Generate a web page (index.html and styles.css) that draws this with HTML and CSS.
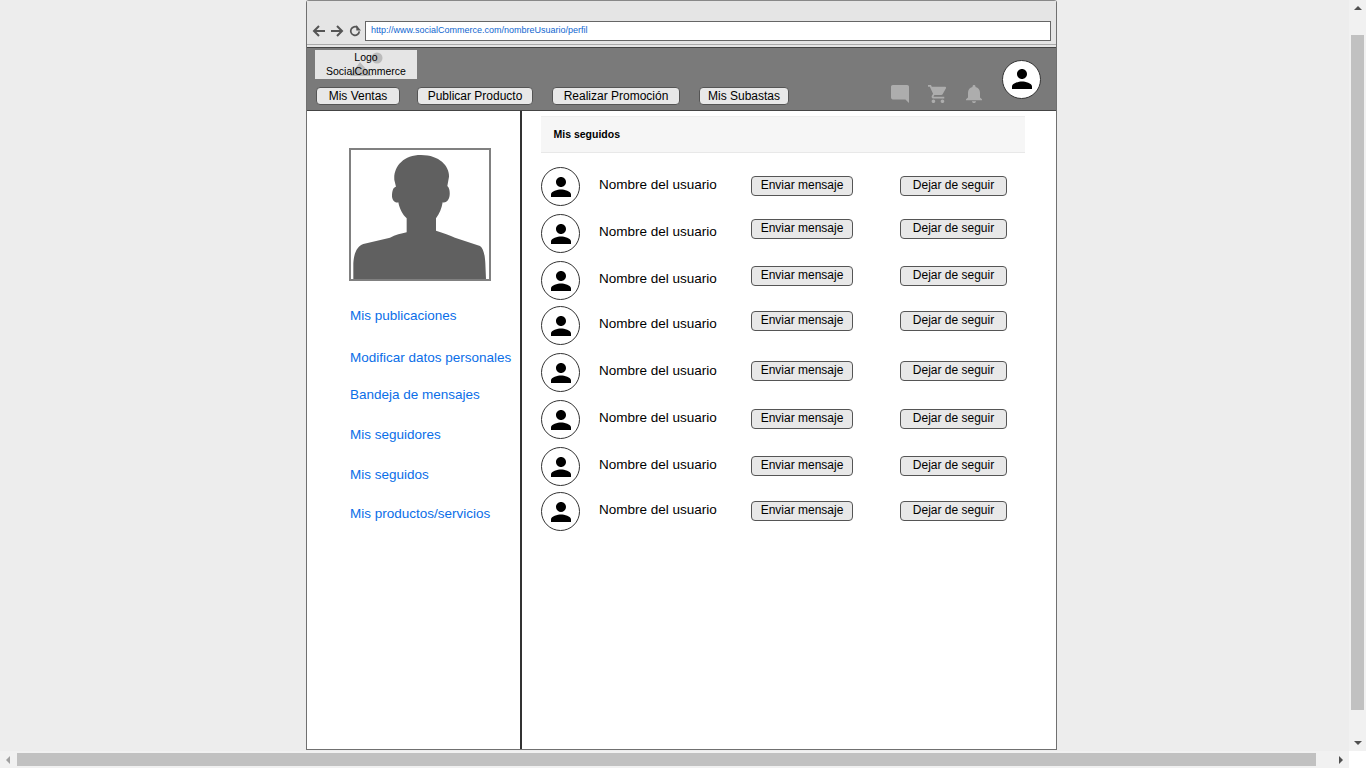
FILE: index.html
```html
<!DOCTYPE html>
<html lang="en">
  <head>
    <meta charset="UTF-8" />
    <title>Mis seguidos</title>
    <link rel="stylesheet" href="styles.css">
  </head>

  <body>
    <svg class="icon-defs" width="0" height="0">
      <symbol id="person" viewBox="0 0 24 24">
        <path d="M12 12c2.21 0 4-1.79 4-4s-1.79-4-4-4-4 1.79-4 4 1.79 4 4 4zm0 2c-2.67 0-8 1.34-8 4v2h16v-2c0-2.66-5.33-4-8-4z" />
      </symbol>
    </svg>

    <div class="viewport">
      <div class="frame">
        <div class="browser-bar">
          <svg class="browser-icon" viewBox="0 0 14 14"><path d="M13 7H2.5M7 2 2 7l5 5" /></svg>
          <svg class="browser-icon" viewBox="0 0 14 14"><path d="M1 7h10.5M7 2l5 5-5 5" /></svg>
          <svg class="browser-icon browser-icon-reload" viewBox="0 0 14 14"><path d="M12 7.500A5 5 0 1 1 10 3" /><path class="solid" d="M8.500 0v6.500H14z" /></svg>
          <div class="url-box">http://www.socialCommerce.com/nombreUsuario/perfil</div>
        </div>

        <header class="topbar">
          <div class="topbar-left">
            <div class="logo">
              <svg class="logo-art" viewBox="0 0 60 29"><circle cx="42" cy="8" r="5.500" /><path d="M15 26 25 12l12 14z" /></svg>
              <span class="logo-text">Logo<br />SocialCommerce</span>
            </div>
            <nav class="main-nav">
              <button class="btn nav-ventas">Mis Ventas</button>
              <button class="btn nav-publicar">Publicar Producto</button>
              <button class="btn nav-promo">Realizar Promoción</button>
              <button class="btn nav-subastas">Mis Subastas</button>
            </nav>
          </div>
          <div class="topbar-right">
            <svg class="top-icon icon-chat" viewBox="2 2 20 20" preserveAspectRatio="none"><path d="M4 2h16c1.100 0 2 .9 2 2v18l-4-4H4c-1.100 0-2-.9-2-2V4c0-1.100.9-2 2-2z" /></svg>
            <svg class="top-icon icon-cart" viewBox="1 2 21 20" preserveAspectRatio="none"><path d="M7 18c-1.100 0-1.990.9-1.990 2S5.900 22 7 22s2-.9 2-2-.9-2-2-2zM1 2v2h2l3.600 7.590-1.350 2.450c-.16.28-.25.61-.25.96 0 1.100.9 2 2 2h12v-2H7.420c-.14 0-.25-.11-.25-.25l.03-.12.9-1.630h7.450c.75 0 1.410-.41 1.750-1.030l3.580-6.470c.08-.14.12-.31.12-.48 0-.55-.45-1-1-1H5.210l-.94-2H1zm16 16c-1.100 0-1.990.9-1.990 2s.89 2 1.990 2 2-.9 2-2-.9-2-2-2z" /></svg>
            <svg class="top-icon icon-bell" viewBox="4 2.500 16 19.500" preserveAspectRatio="none"><path d="M12 22c1.100 0 2-.9 2-2h-4c0 1.100.89 2 2 2zm6-6v-5c0-3.070-1.640-5.640-4.500-6.320V4c0-.83-.67-1.500-1.500-1.500s-1.500.67-1.500 1.500v.68C7.630 5.360 6 7.920 6 11v5l-2 2v1h16v-1l-2-2z" /></svg>
            <div class="avatar avatar-top"><svg viewBox="0 0 24 24"><use href="#person" /></svg></div>
          </div>
        </header>

        <div class="content">
          <aside class="sidebar">
            <div class="profile-pic">
              <svg viewBox="33 30 414 387">
                <path d="M40 417V370C42 340 50 320 70 312L150 293C165 285 185 280 200 277V235C188 225 178 205 175 187C165 190 155 180 156 165C157 150 160 142 168 140L163 120C160 80 190 45 243 45C300 45 328 80 327 110L322 138C328 142 330 155 329 165C328 180 318 190 308 187C305 205 298 222 288 235V272C310 278 330 287 345 293L420 318C430 325 435 345 436 370L438 417Z" />
              </svg>
            </div>
            <ul class="side-links">
              <li class="link-pub"><a href="#">Mis publicaciones</a></li>
              <li class="link-datos"><a href="#">Modificar datos personales</a></li>
              <li class="link-bandeja"><a href="#">Bandeja de mensajes</a></li>
              <li class="link-seguidores"><a href="#">Mis seguidores</a></li>
              <li class="link-seguidos"><a href="#">Mis seguidos</a></li>
              <li class="link-productos"><a href="#">Mis productos/servicios</a></li>
            </ul>
          </aside>

          <main class="main">
            <div class="section-title">Mis seguidos</div>
            <div class="user-list">
              <div class="user-row btn-low">
                <div class="avatar"><svg viewBox="0 0 24 24"><use href="#person" /></svg></div>
                <span class="user-name">Nombre del usuario</span>
                <button class="btn btn-msg">Enviar mensaje</button>
                <button class="btn btn-unfollow">Dejar de seguir</button>
              </div>
              <div class="user-row btn-high">
                <div class="avatar"><svg viewBox="0 0 24 24"><use href="#person" /></svg></div>
                <span class="user-name">Nombre del usuario</span>
                <button class="btn btn-msg">Enviar mensaje</button>
                <button class="btn btn-unfollow">Dejar de seguir</button>
              </div>
              <div class="user-row btn-high">
                <div class="avatar"><svg viewBox="0 0 24 24"><use href="#person" /></svg></div>
                <span class="user-name">Nombre del usuario</span>
                <button class="btn btn-msg">Enviar mensaje</button>
                <button class="btn btn-unfollow">Dejar de seguir</button>
              </div>
              <div class="user-row btn-high">
                <div class="avatar"><svg viewBox="0 0 24 24"><use href="#person" /></svg></div>
                <span class="user-name">Nombre del usuario</span>
                <button class="btn btn-msg">Enviar mensaje</button>
                <button class="btn btn-unfollow">Dejar de seguir</button>
              </div>
              <div class="user-row btn-mid">
                <div class="avatar"><svg viewBox="0 0 24 24"><use href="#person" /></svg></div>
                <span class="user-name">Nombre del usuario</span>
                <button class="btn btn-msg">Enviar mensaje</button>
                <button class="btn btn-unfollow">Dejar de seguir</button>
              </div>
              <div class="user-row btn-low">
                <div class="avatar"><svg viewBox="0 0 24 24"><use href="#person" /></svg></div>
                <span class="user-name">Nombre del usuario</span>
                <button class="btn btn-msg">Enviar mensaje</button>
                <button class="btn btn-unfollow">Dejar de seguir</button>
              </div>
              <div class="user-row btn-low">
                <div class="avatar"><svg viewBox="0 0 24 24"><use href="#person" /></svg></div>
                <span class="user-name">Nombre del usuario</span>
                <button class="btn btn-msg">Enviar mensaje</button>
                <button class="btn btn-unfollow">Dejar de seguir</button>
              </div>
              <div class="user-row btn-low">
                <div class="avatar"><svg viewBox="0 0 24 24"><use href="#person" /></svg></div>
                <span class="user-name">Nombre del usuario</span>
                <button class="btn btn-msg">Enviar mensaje</button>
                <button class="btn btn-unfollow">Dejar de seguir</button>
              </div>
            </div>
          </main>
        </div>
      </div>
    </div>

    <div class="scroll-v">
      <span class="arrow arrow-up"></span>
      <div class="track-v"><div class="thumb thumb-v"></div></div>
      <span class="arrow arrow-down"></span>
    </div>
    <div class="scroll-h">
      <span class="arrow arrow-left"></span>
      <div class="track-h"><div class="thumb thumb-h"></div></div>
      <span class="arrow arrow-right"></span>
    </div>
    <div class="scroll-corner"></div>
  </body>
</html>
```

FILE: styles.css
```css
html,
body {
  margin: 0;
  padding: 0;
  height: 100%;
  overflow: hidden;
}

body {
  display: grid;
  grid-template-columns: 1349px 17px;
  grid-template-rows: 751px 17px;
  font-family: "Liberation Sans", Arial, sans-serif;
  background-color: #ededed;
}

.icon-defs {
  position: absolute;
}

.viewport {
  overflow: hidden;
  padding-left: 306px;
}

.frame {
  box-sizing: border-box;
  width: 751px;
  height: 750px;
  border: 1px solid #707070;
  border-top-color: #888;
  border-radius: 3px 3px 0 0;
  background-color: #fff;
  display: flex;
  flex-direction: column;
}

/* browser chrome */
.browser-bar {
  box-sizing: border-box;
  height: 46px;
  padding: 19px 5px 5px 5px;
  background-color: #e5e5e5;
  box-shadow: inset 0 -2px 0 #e5e5e5, inset 0 -3px 0 #aaa;
  display: flex;
  align-items: center;
  gap: 4px;
}

.browser-icon {
  width: 14px;
  height: 14px;
  fill: none;
  stroke: #555;
  stroke-width: 2;
}

.browser-icon-reload {
  width: 12px;
  height: 12px;
  margin-left: 1px;
  stroke-width: 2;
}

.browser-icon .solid {
  fill: #555;
  stroke: none;
}

.url-box {
  box-sizing: border-box;
  flex: 1;
  height: 20px;
  padding-left: 5px;
  background-color: #fff;
  border: 1px solid #666;
  font-size: 9px;
  line-height: 17px;
  color: #0f66d0;
}

/* top bar */
.topbar {
  box-sizing: border-box;
  height: 64px;
  background-color: #7a7a7a;
  border-top: 1px solid #444;
  border-bottom: 1px solid #444;
  display: flex;
  justify-content: space-between;
  padding: 2px 15px 0 8px;
}

.logo {
  position: relative;
  width: 102px;
  height: 29px;
  background-color: #e5e5e5;
  text-align: center;
  font-size: 10.5px;
  line-height: 14px;
  color: #000;
}

.logo-art {
  position: absolute;
  left: 20px;
  top: 0;
  width: 60px;
  height: 29px;
  fill: #bbb;
}

.logo-text {
  position: relative;
}

.main-nav {
  display: flex;
  margin: 8px 0 0 1px;
}

.btn {
  box-sizing: border-box;
  height: 18px;
  padding: 0;
  background-color: #e8e8e8;
  border: 1px solid #555;
  border-radius: 4px;
  font-family: "Liberation Sans", Arial, sans-serif;
  font-size: 12px;
  line-height: 16px;
  color: #000;
}

.nav-ventas {
  width: 84px;
  margin-right: 17px;
}

.nav-publicar {
  width: 116px;
  margin-right: 19px;
}

.nav-promo {
  width: 128px;
  margin-right: 19px;
}

.nav-subastas {
  width: 90px;
}

.topbar-right {
  display: flex;
  align-items: flex-start;
}

.top-icon {
  fill: #adadad;
  height: 18px;
  margin-top: 35px;
}

.icon-chat {
  width: 18px;
  margin-right: 19px;
}

.icon-cart {
  width: 19px;
  margin-right: 19px;
}

.icon-bell {
  width: 16px;
  margin-right: 20px;
}

.avatar {
  box-sizing: border-box;
  width: 39px;
  height: 39px;
  flex: none;
  background-color: #fff;
  border: 1px solid #333;
  border-radius: 50%;
  display: flex;
  align-items: center;
  justify-content: center;
}

.avatar svg {
  width: 30px;
  height: 30px;
  fill: #000;
}

.avatar-top {
  margin-top: 9.5px;
}

/* body */
.content {
  flex: 1;
  display: flex;
  min-height: 0;
}

.sidebar {
  box-sizing: border-box;
  width: 215px;
  border-right: 2px solid #333;
  padding: 37px 0 0 42px;
}

.profile-pic {
  box-sizing: border-box;
  width: 142px;
  height: 133px;
  border: 2px solid #808080;
  background-color: #fff;
}

.profile-pic svg {
  display: block;
  width: 138px;
  height: 129px;
  fill: #606060;
}

.side-links {
  list-style: none;
  margin: 0;
  padding: 0 0 0 1px;
  font-size: 13.5px;
  line-height: 16px;
}

.side-links a {
  color: #0a6ee8;
  text-decoration: none;
  white-space: nowrap;
}

.link-pub {
  margin-top: 27px;
}

.link-datos {
  margin-top: 26px;
}

.link-bandeja {
  margin-top: 21px;
}

.link-seguidores {
  margin-top: 24px;
}

.link-seguidos {
  margin-top: 24px;
}

.link-productos {
  margin-top: 23px;
}

.main {
  flex: 1;
  padding: 5px 0 0 19px;
}

.section-title {
  box-sizing: border-box;
  width: 484px;
  height: 37px;
  padding-left: 12.5px;
  background-color: #f6f6f6;
  border-top: 1px solid #eee;
  border-bottom: 1px solid #e8e8e8;
  font-size: 10.5px;
  font-weight: bold;
  line-height: 35px;
  color: #000;
}

.user-list {
  margin-top: 14px;
}

.user-row {
  display: grid;
  grid-template-columns: 58px 152px 149px 107px;
  height: 40px;
  margin-bottom: 7px;
  align-items: start;
}

.user-row:nth-child(3),
.user-row:nth-child(7) {
  margin-bottom: 5px;
}

.user-name {
  margin-top: 10px;
  font-size: 13.5px;
  line-height: 16px;
  color: #000;
}

.btn-msg {
  width: 102px;
  height: 20px;
  padding-bottom: 2px;
}

.btn-unfollow {
  width: 107px;
  height: 20px;
  padding-bottom: 2px;
}

.btn-low .btn {
  margin-top: 9px;
}

.btn-mid .btn {
  margin-top: 8px;
}

.btn-high .btn {
  margin-top: 5px;
}

/* fake scrollbars of the screenshot */
.scroll-v,
.scroll-h {
  background-color: #f1f1f1;
  display: flex;
  align-items: center;
  justify-content: space-between;
}

.scroll-v {
  flex-direction: column;
}

.track-v {
  flex: 1;
  width: 100%;
  padding-top: 19px;
  box-sizing: border-box;
}

.thumb {
  background-color: #c1c1c1;
}

.thumb-v {
  width: 13px;
  height: 675px;
  margin-left: 2px;
}

.track-h {
  flex: 1;
  height: 13px;
}

.thumb-h {
  width: 1299px;
  height: 13px;
}

.arrow {
  flex: none;
  width: 0;
  height: 0;
  border-style: solid;
  border-color: transparent;
  margin: 6px;
}

.arrow-up {
  border-width: 0 4px 4px 4px;
  border-bottom-color: #505050;
}

.arrow-down {
  border-width: 4px 4px 0 4px;
  border-top-color: #505050;
}

.arrow-left {
  margin-right: 7px;
  border-width: 4px 4px 4px 0;
  border-right-color: #a0a0a0;
}

.arrow-right {
  border-width: 4px 0 4px 4px;
  border-left-color: #505050;
}

.scroll-corner {
  background-color: #fff;
}
```
